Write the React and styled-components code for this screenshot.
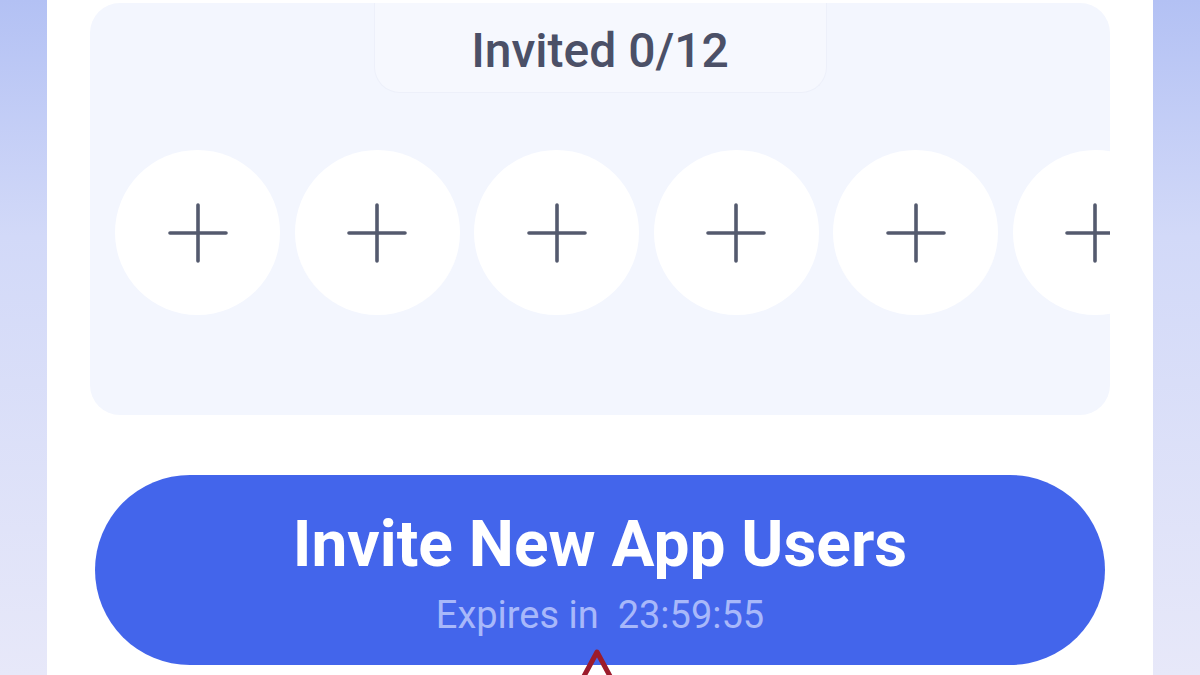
import React from 'react'
import styled, { createGlobalStyle } from 'styled-components'

const GlobalStyle = createGlobalStyle`
  html, body {
    margin: 0;
    padding: 0;
  }
  body {
    font-family: Roboto, "Liberation Sans", sans-serif;
    background: linear-gradient(180deg, #b3c1f4 0%, #d2d9f8 35%, #e7e8f9 100%);
    height: 675px;
    overflow: hidden;
  }
`

const Page = styled.div`
  width: 1200px;
  height: 675px;
  display: flex;
  justify-content: center;
`

const Card = styled.div`
  position: relative;
  width: 1106px;
  height: 675px;
  background: #ffffff;
  padding: 3px 43px 0;
  box-sizing: border-box;
  overflow: hidden;
`

const Panel = styled.div`
  background: #f3f6fe;
  border-radius: 30px;
  height: 412px;
  display: flex;
  flex-direction: column;
  align-items: center;
  overflow: hidden;
`

const Tab = styled.div`
  margin-top: -12px;
  width: 453px;
  height: 102px;
  box-sizing: border-box;
  background: #f6f8fe;
  border: 1.5px solid #edf0fa;
  border-top: none;
  border-radius: 0 0 26px 26px;
  display: flex;
  justify-content: center;
  padding-top: 36px;
  color: #4b5067;
  font-size: 48px;
  font-weight: 500;
  line-height: 1;
`

const SlotRow = styled.div`
  align-self: stretch;
  display: flex;
  gap: 14.5px;
  padding-left: 25px;
  margin-top: 57px;
`

const Slot = styled.div`
  flex: 0 0 165px;
  height: 165px;
  border-radius: 50%;
  background: #ffffff;
  display: flex;
  align-items: center;
  justify-content: center;
`

const InviteButton = styled.div`
  margin: 60px 5px 0;
  height: 190px;
  box-sizing: border-box;
  padding-top: 38px;
  border-radius: 95px;
  background: #4365eb;
  display: flex;
  flex-direction: column;
  align-items: center;
`

const Title = styled.div`
  color: #ffffff;
  font-size: 64px;
  font-weight: 700;
  line-height: 1;
`

const Expires = styled.div`
  color: #a8b8fa;
  font-size: 38px;
  font-weight: 400;
  line-height: 1;
  margin-top: 19px;
  white-space: pre;
`

const Caret = styled.svg`
  position: absolute;
  left: 532px;
  top: 646px;
`

function Plus() {
  return (
    <svg width="60" height="60" viewBox="0 0 60 60">
      <path d="M30 2 V58 M2 30 H58" stroke="#545a6e" strokeWidth="3.6" strokeLinecap="round" fill="none" />
    </svg>
  )
}

export default function App() {
  return (
    <Page>
      <GlobalStyle />
      <Card>
        <Panel>
          <Tab>Invited 0/12</Tab>
          <SlotRow>
            {[0, 1, 2, 3, 4, 5].map(i => (
              <Slot key={i}>
                <Plus />
              </Slot>
            ))}
          </SlotRow>
        </Panel>
        <InviteButton>
          <Title>Invite New App Users</Title>
          <Expires>Expires in  23:59:55</Expires>
        </InviteButton>
        <Caret width="36" height="32" viewBox="0 0 36 32">
          <path d="M4 32 L18 6 L32 32" stroke="#9c1b2b" strokeWidth="5" fill="none" strokeLinejoin="round" />
        </Caret>
      </Card>
    </Page>
  )
}
